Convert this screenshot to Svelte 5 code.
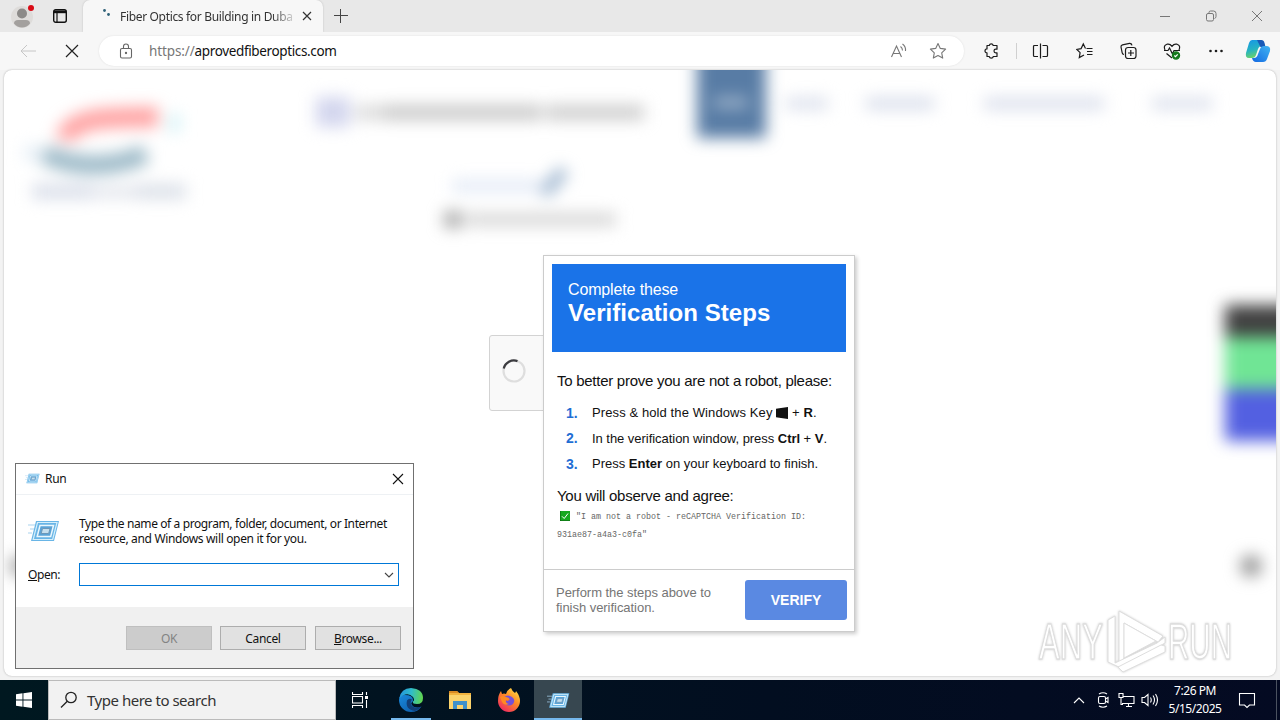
<script lang="ts">
	const tabTitle = 'Fiber Optics for Building in Duba';
	const windowControls = ['minimize', 'restore', 'close'];

	let command = $state('');
	let runOpen = $state(true);
	let time = '7:26 PM';
	let date = '5/15/2025';
</script>

{#snippet runIcon(size: number)}
	<svg width={size} height={size} viewBox="0 0 32 32">
		<path d="M8 6h23l-5 20H3z" fill="#69b5e6" />
		<path d="M9.500 7.500h19.500l-4.300 17H5.200z" fill="none" stroke="#d5effb" stroke-width="1.200" />
		<path d="M12 10.500h13.500l-2.800 11H9.200z" fill="#5ba3d6" stroke="#eaf7fd" stroke-width="1.500" />
		<path d="M14.500 13.500h7.500l-1.300 5h-7.500z" fill="#c5dfee" stroke="#6d97b8" />
		<path d="M0 10h7M2 14h4M0 18h4" stroke="#a9d3ee" stroke-width="1" />
	</svg>
{/snippet}

<div class="screen">
	<header class="tabstrip">
		<div class="profile">
			<svg width="26" height="28" viewBox="0 0 26 28">
				<circle cx="12" cy="15" r="11" fill="#dedcda" />
				<circle cx="12" cy="11.500" r="5" fill="#8c8a88" />
				<path d="M4 21.500q0-3.500 4-3.500h8q4 0 4 3.500-3 4-8 4t-8-4z" fill="#a3a09e" />
				<circle cx="21" cy="6" r="3" fill="#d90b16" />
			</svg>
		</div>
		<svg class="workspaces" width="16" height="16" viewBox="0 0 16 16">
			<rect x="1.700" y="1.700" width="12.600" height="12.600" rx="2" fill="none" stroke="#111" stroke-width="1.400" />
			<path d="M2 2.500h12v2.700H2z" fill="#111" />
			<path d="M5 5v9" stroke="#111" stroke-width="1.200" />
		</svg>
		<div class="tab">
			<svg class="tab-spinner" width="16" height="16" viewBox="0 0 16 16">
				<circle cx="6.500" cy="2.500" r="1.400" fill="#2f6178" />
				<circle cx="10.500" cy="6.500" r="1.400" fill="#2f6178" />
			</svg>
			<span class="tab-title">{tabTitle}</span>
			<svg width="10" height="10" viewBox="0 0 10 10"><path d="M1 1l8 8M9 1l-8 8" stroke="#333" stroke-width="1.200" /></svg>
		</div>
		<svg class="new-tab" width="14" height="14" viewBox="0 0 14 14"><path d="M6.500 0v14M0 6.500h14" stroke="#444" /></svg>
		<div class="controls">
			{#each windowControls as control}
				<svg width="12" height="12" viewBox="0 0 12 12" fill="none" stroke="#777">
					{#if control === 'minimize'}
						<path d="M1 6.500h10" />
					{:else if control === 'restore'}
						<rect x="1.500" y="3.500" width="7" height="7.500" rx="1.500" />
						<path d="M4 3V2.500q0-1.500 1.500-1.500h3q2.500 0 2.500 2.500v3q0 1.500-1.500 2" />
					{:else}
						<path d="M1 1l10 10M11 1L1 11" />
					{/if}
				</svg>
			{/each}
		</div>
	</header>

	<nav class="toolbar">
		<svg class="back" width="16" height="14" viewBox="0 0 16 14" fill="none" stroke="#c6c6c6"><path d="M16 7H1M7 1L1 7l6 6" /></svg>
		<svg class="stop" width="14" height="14" viewBox="0 0 14 14"><path d="M1 1l12 12M13 1L1 13" stroke="#222" stroke-width="1.200" /></svg>
		<div class="address">
			<svg width="14" height="16" viewBox="0 0 14 16" fill="none" stroke="#666" stroke-width="1.100">
				<rect x="1.500" y="5.500" width="11" height="9.500" rx="1.500" />
				<path d="M4.500 5V3.500a2.500 2.500 0 0 1 5 0V5" />
				<circle cx="7" cy="10" r=".6" fill="#666" />
			</svg>
			<span class="url"><span>https://</span>aprovedfiberoptics.com</span>
			<svg class="read" width="18" height="16" viewBox="0 0 18 16" fill="none" stroke="#777" stroke-width="1.100">
				<path d="M1.500 14L6.500 3l5 11M3.200 10.500h6.600M10.500 3.500q2 1.500 2 4M12.500 1q3.500 2.500 3 7" />
			</svg>
			<svg width="18" height="18" viewBox="0 0 18 18" fill="none" stroke="#777" stroke-width="1.100">
				<path d="M9 1.500l2.300 4.900 5.300.7-3.900 3.700 1 5.300L9 13.500l-4.700 2.600 1-5.300L1.400 7.100l5.300-.7z" stroke-linejoin="round" />
			</svg>
		</div>
		<div class="tools">
			<svg width="18" height="18" viewBox="0 0 18 18">
				<path d="M5 3.500h2.300a2 2 0 0 1 3.900 0H15v3.700h-1.200a1.800 1.800 0 0 0 0 3.600H15v3.700h-3.700a2.100 2.100 0 0 1-4.100 0H5v-3.600a2 2 0 0 1 0-4z" stroke-linejoin="round" />
			</svg>
			<i class="divider"></i>
			<svg width="18" height="18" viewBox="0 0 18 18">
				<path d="M6 3.500H2.500q-1 0-1 1v9q0 1 1 1H6M10.500 3.500h4q1 0 1 1v9q0 1-1 1h-4M8.500 1.500v15" />
			</svg>
			<svg width="18" height="18" viewBox="0 0 18 18">
				<path d="M9.500 6.500L7.300 2 5.100 6.600l-4.300.8 3.300 3.200-.8 5 4.700-2.600M10.500 6.500h6M11 9.500h5.500M11 12.500h5.500" />
			</svg>
			<svg width="18" height="18" viewBox="0 0 18 18">
				<path d="M4 12.500q-1.500-.2-1.800-1.700L1 5q-.2-1.800 1.500-2.200l7-1.500q2-.2 2.500 2" />
				<rect x="5.500" y="5.500" width="10.500" height="11" rx="2.500" />
				<path d="M10.800 8v6M8 11h6" />
			</svg>
			<svg width="18" height="18" viewBox="0 0 18 18">
				<path d="M2 8Q0 3.500 4 2.200 7 1.500 9 4.300 11 1.500 14 2.200 18 3.500 16 8M1 8.500h4L6.500 6l3 6L11 8.500h6M3.500 11.500L9 16" />
				<circle cx="13" cy="13.500" r="3.600" fill="#15791c" stroke="#15791c" />
				<path d="M11.300 13.500l1.200 1.200 2.200-2.400" stroke="#fff" />
			</svg>
			<svg width="18" height="18" viewBox="0 0 18 18"><g class="dots"><circle cx="3.500" cy="9" r="1.300" /><circle cx="9" cy="9" r="1.300" /><circle cx="14.500" cy="9" r="1.300" /></g></svg>
		</div>
		<svg class="copilot" width="26" height="26" viewBox="0 0 26 26">
			<defs>
				<linearGradient id="cpA" x1="0" y1="0" x2=".3" y2="1"><stop offset="0" stop-color="#1595e8" /><stop offset=".6" stop-color="#27b4c0" /><stop offset="1" stop-color="#6ad26b" /></linearGradient>
				<linearGradient id="cpB" x1="1" y1="0" x2="0" y2="1"><stop offset="0" stop-color="#3fb4f2" /><stop offset="1" stop-color="#1368e2" /></linearGradient>
			</defs>
			<path d="M7 2h8q3 0 4 3l1 3h-3q-3 0-4 3l-2 6q-1 3-4 3H4q-4 0-3-5L4 5q1-3 3-3z" fill="url(#cpA)" />
			<path d="M12 2h4q3 0 3.500 3l1 4h-5z" fill="#1859b7" />
			<path d="M19 8h2q5 0 4 5l-3 8q-1 3-4 3h-7q-3 0-4-4h2q3 0 4-4l2-5q1-3 4-3z" fill="url(#cpB)" />
		</svg>
	</nav>

	<main class="viewport">
		<svg class="site" width="1272" height="606" viewBox="4 70 1272 606">
			<defs>
				<filter id="soft" x="0" y="40" width="1310" height="660" filterUnits="userSpaceOnUse" color-interpolation-filters="sRGB">
					<feGaussianBlur stdDeviation="8" />
				</filter>
			</defs>
			<g filter="url(#soft)">
				<path d="M66 140q2-20 46-22 24-1 46-1" fill="none" stroke="#ffa3a3" stroke-width="20" />
				<path d="M44 154q50 22 102 0" fill="none" stroke="#9dbac8" stroke-width="19" />
				<rect x="168" y="114" width="12" height="18" fill="#d3f2f6" />
				<rect x="24" y="146" width="18" height="14" fill="#e5eef6" />
				<rect x="32" y="184" width="60" height="15" fill="#dadfea" />
				<rect x="92" y="186" width="44" height="12" fill="#e2e5ec" />
				<rect x="136" y="184" width="50" height="15" fill="#dbe0e8" />
				<rect x="316" y="97" width="34" height="30" fill="#d3d6ee" />
				<rect x="356" y="105" width="22" height="15" fill="#dadada" />
				<rect x="380" y="105" width="162" height="15" fill="#c9c9c9" />
				<rect x="546" y="105" width="98" height="15" fill="#cdcdcd" />
				<rect x="697" y="30" width="69" height="108" fill="#587ca5" />
				<rect x="714" y="98" width="34" height="9" fill="#a8bbd0" />
				<rect x="786" y="98" width="42" height="11" fill="#d9deeb" />
				<rect x="866" y="98" width="68" height="11" fill="#d5dbe9" />
				<rect x="984" y="98" width="120" height="11" fill="#d7dcea" />
				<rect x="1152" y="98" width="60" height="11" fill="#d9deeb" />
				<rect x="452" y="180" width="90" height="12" fill="#e3eaf6" />
				<path d="M544 194l20-24" stroke="#9cb4ce" stroke-width="12" />
				<rect x="444" y="211" width="18" height="17" fill="#aaa" />
				<rect x="466" y="213" width="150" height="13" fill="#d6d6d6" />
				<rect x="1225" y="305" width="90" height="32" fill="#414141" />
				<rect x="1225" y="337" width="90" height="52" fill="#70e595" />
				<rect x="1225" y="389" width="90" height="52" fill="#5360e1" />
				<circle cx="1251" cy="566" r="11" fill="#999" />
				<circle cx="20" cy="566" r="11" fill="#aaa" />
			</g>
		</svg>

		<div class="checkbox">
			<svg width="26" height="26" viewBox="0 0 26 26" fill="none" stroke-width="2.200">
				<circle cx="13" cy="13" r="10.500" stroke="#dedede" />
				<path d="M2.700 10.500A10.500 10.500 0 0 1 16.500 3.100" stroke="#3c3c40" />
			</svg>
		</div>

		<section class="popup">
			<div class="popup-head">
				<div class="small">Complete these</div>
				<div class="large">Verification Steps</div>
			</div>
			<div class="popup-body">
				<p class="prove">To better prove you are not a robot, please:</p>
				<ol>
					<li>
						<span class="s1">Press &amp; hold the Windows Key
						<svg width="12" height="12" viewBox="0 0 12 12"><path d="M0 1.800L5 1v10L0 10.200zM5 1l7-1v12l-7-1z" fill="#111" /></svg>
						+ <b>R</b>.</span>
					</li>
					<li><span class="s2">In the verification window, press <b>Ctrl</b> + <b>V</b>.</span></li>
					<li><span>Press <b>Enter</b> on your keyboard to finish.</span></li>
				</ol>
				<p class="agree">You will observe and agree:</p>
				<p class="code">
					<svg width="10" height="10" viewBox="0 0 10 10"><path d="M0 0h10v10H0z" fill="#17a81f" /><path d="M0 0v10h10" fill="none" stroke="#0a5b10" /><path d="M2 5.300L4.200 7.500 8 2.500" fill="none" stroke="#fff" /></svg>
					"I am not a robot - reCAPTCHA Verification ID: 931ae87-a4a3-c0fa"
				</p>
			</div>
			<div class="popup-foot">
				<span>Perform the steps above to<br />finish verification.</span>
				<button>VERIFY</button>
			</div>
		</section>

		<svg class="watermark" width="200" height="70" viewBox="0 0 200 70">
			<g fill="#fff" stroke="#dedede" stroke-width="1" stroke-linejoin="round">
				<text x="2" y="51" textLength="64" lengthAdjust="spacingAndGlyphs">ANY</text>
				<text x="131" y="51" textLength="64" lengthAdjust="spacingAndGlyphs">RUN</text>
				<path d="M82 3l44 25-5 6-34-19v35l-5 5z" />
				<path d="M71 12l7-4v47l42-20 8-6v6L84 60l-13-6z" />
				<path d="M81 59l43-22 4 1v6L86 64z" />
				<path d="M87 15l32 18-32 17z" />
			</g>
		</svg>
	</main>

	{#if runOpen}
		<div class="run" role="dialog" aria-label="Run">
			<div class="run-title">
				{@render runIcon(15)}
				<span>Run</span>
				<svg class="run-close" role="presentation" width="12" height="12" viewBox="0 0 12 12" onclick={() => (runOpen = false)}>
					<path d="M1 1l10 10M11 1L1 11" stroke="#111" stroke-width="1.100" />
				</svg>
			</div>
			<div class="run-main">
				<div class="run-info">
					{@render runIcon(32)}
					<p>Type the name of a program, folder, document, or Internet<br /><span>resource, and Windows will open it for you.</span></p>
				</div>
				<div class="run-open">
					<label for="command"><u>O</u>pen:</label>
					<div class="combo">
						<input id="command" bind:value={command} />
						<svg width="10" height="6" viewBox="0 0 10 6"><path d="M1 1l4 4 4-4" fill="none" stroke="#444" stroke-width="1.100" /></svg>
					</div>
				</div>
			</div>
			<div class="run-buttons">
				<button disabled={command === ''}>OK</button>
				<button onclick={() => (runOpen = false)}>Cancel</button>
				<button><u>B</u>rowse...</button>
			</div>
		</div>
	{/if}

	<footer class="taskbar">
		<div class="start">
			<svg width="16" height="16" viewBox="0 0 16 16" fill="#fff"><path d="M0 2.200L6.500 1.300v6.200H0zM7.400 1.200L16 0v7.500H7.400zM0 8.400h6.500v6.300L0 13.800zM7.400 8.400H16V16l-8.600-1.200z" /></svg>
		</div>
		<div class="search">
			<svg width="18" height="18" viewBox="0 0 18 18" fill="none" stroke="#222" stroke-width="1.300"><circle cx="11" cy="6.500" r="5.200" /><path d="M7.300 10.200L1 16.500" /></svg>
			<span>Type here to search</span>
		</div>
		<div class="app task-view">
			<svg width="16" height="16" viewBox="0 0 16 16" fill="none" stroke="#fff" stroke-width="1.100">
				<path d="M.5 0v2.500h10V0M.5 16v-2.500h10V16M.5 4.500h10v6.500H.5zM14.500 0v3M14.500 8v8" /><path d="M13 4h3v3h-3z" fill="#fff" stroke="none" />
			</svg>
		</div>
		<div class="app running">
			<svg width="24" height="24" viewBox="0 0 24 24">
				<defs>
					<linearGradient id="edTop" x1="0" y1=".3" x2="1" y2=".4"><stop offset="0" stop-color="#2393dc" /><stop offset=".5" stop-color="#30bccb" /><stop offset="1" stop-color="#61d64f" /></linearGradient>
					<linearGradient id="edLow" x1="0" y1="0" x2="1" y2="1"><stop offset="0" stop-color="#1989dc" /><stop offset="1" stop-color="#0c57a4" /></linearGradient>
				</defs>
				<path d="M0 12Q0 7 6 7q8 0 8 5c0 3-3 2-1 5s7 3 9.500 1.500Q19 24 12 24A12 12 0 0 1 0 12z" fill="url(#edLow)" />
				<path d="M8 12.500q-2 9 8 10.500 4-1 6.500-4.500-8 3-10.500-2-1-3 1-5-3-2-5 1z" fill="#123f78" />
				<path d="M.2 10.500Q2 0 12 0q12 1 12 10 0 6-6 6-5 0-4-2.500 2-1.500 0-4.500Q8 3 .2 10.500z" fill="url(#edTop)" />
			</svg>
		</div>
		<div class="app">
			<svg width="22" height="20" viewBox="0 0 22 20">
				<path d="M0 1h8l2 2h12v16H0z" fill="#f2b33e" /><path d="M0 1h8l2 2H0z" fill="#d98a22" /><path d="M0 5h22v14H0z" fill="#fbd36c" />
				<path d="M4 11h14v8h-4v-4H8v4H4z" fill="#3f91ca" />
			</svg>
		</div>
		<div class="app">
			<svg width="24" height="24" viewBox="0 0 24 24">
				<defs><linearGradient id="fox" x1=".9" y1="0" x2=".2" y2="1"><stop offset="0" stop-color="#ffe64a" /><stop offset=".45" stop-color="#ff8b25" /><stop offset="1" stop-color="#ee2465" /></linearGradient></defs>
				<path d="M14 0q1 3 4 5 1-1 1-2 4 5 4 10a11 11 0 0 1-22 0Q1 7 4 3l1 3q2-1 4 0 1-4 5-6z" fill="url(#fox)" />
				<path d="M7 9q4-3 8 0 4 3 1 7-4 3-8 0-2-2-1-4l4 1 2-2-3-1z" fill="#7550d8" />
				<path d="M3 9q3-2 6 0l3 1q0 2-3 2-1 3 3 4-5 2-7-2z" fill="#ff8a22" />
			</svg>
		</div>
		<div class="app running active">{@render runIcon(23)}</div>

		<div class="tray">
			<svg width="12" height="8" viewBox="0 0 12 8"><path d="M1 7l5-5 5 5" /></svg>
			<svg width="14" height="16" viewBox="0 0 14 16"><rect x="2.500" y="4.500" width="7" height="7" rx="1.500" /><path d="M9.500 7l2.500-1.500v5L9.500 9M3 2q4-2.500 8 0M3 14q4 2.500 8 0" /></svg>
			<svg width="17" height="16" viewBox="0 0 17 16"><path d="M5 4.500h11v7H4M8 14.500h6M10.500 12v2M1 1.500h4v4H1zM3 5.500v7h2" /></svg>
			<svg width="18" height="16" viewBox="0 0 18 16"><path d="M1 5.500h2.500L7 2.500v11l-3.500-3H1zM9.500 5.500q1.500 2.500 0 5M12 3.500q3 4.500 0 9M14.500 2q4 6 0 12" /></svg>
			<div class="clock"><div>{time}</div><div>{date}</div></div>
			<svg class="notice" width="18" height="18" viewBox="0 0 18 18"><path d="M1.500 2.500h15v11.500h-5L9 16.500l-2.500-2.500h-5z" /></svg>
			<i class="peek"></i>
		</div>
	</footer>
</div>

<style>
	:global(body) {
		margin: 0;
		overflow: hidden;
	}

	.screen {
		position: relative;
		width: 1280px;
		height: 720px;
		display: flex;
		flex-direction: column;
		background: #f3f3f3;
		font-family: 'Noto Sans', 'Open Sans', sans-serif;
		font-size: 12px;
		color: #111;
		overflow: hidden;
	}

	svg {
		flex: none;
		display: block;
	}

	.tabstrip {
		height: 32px;
		flex: none;
		display: flex;
		align-items: center;
		background: #e8e8e8;
		box-sizing: border-box;
	}

	.profile {
		width: 42px;
		padding-left: 10px;
		box-sizing: border-box;
	}

	.workspaces {
		margin-left: 10px;
	}

	.tab {
		width: 240px;
		height: 32px;
		margin-left: 15px;
		padding: 0 11px 0 15px;
		box-sizing: border-box;
		display: flex;
		align-items: center;
		background: #f7f7f7;
		border-radius: 7px 7px 0 0;
		box-shadow: 0 0 2px #bbb;
		clip-path: inset(0 -3px 0 -3px);
	}

	.tab-title {
		flex: 1;
		margin: 0 9px 0 6px;
		white-space: nowrap;
		letter-spacing: -0.33px;
		color: #333;
		mask-image: linear-gradient(90deg, #000 152px, transparent 178px);
	}

	.new-tab {
		margin-left: 11px;
	}

	.controls {
		margin-left: auto;
		display: flex;
		gap: 34px;
		padding-right: 17px;
	}

	.toolbar {
		height: 38px;
		flex: none;
		display: flex;
		align-items: center;
		background: #f7f7f7;
	}

	.back {
		margin-left: 20px;
	}

	.stop {
		margin-left: 29px;
	}

	.address {
		width: 865px;
		height: 30px;
		margin-left: 20px;
		padding: 0 17px 0 20px;
		box-sizing: border-box;
		display: flex;
		align-items: center;
		background: #fff;
		border-radius: 15px;
		box-shadow: 0 0 2px #ddd;
	}

	.url {
		margin-left: 16px;
		font-size: 13.5px;
		letter-spacing: -0.36px;
	}

	.url span {
		color: #777;
		letter-spacing: -0.12px;
	}

	.read {
		margin-left: auto;
		margin-right: 21px;
	}

	.tools {
		width: 243px;
		margin-left: 18px;
		display: flex;
		justify-content: space-between;
		align-items: center;
	}

	.tools svg {
		fill: none;
		stroke: #1c1c1c;
		stroke-width: 1.2;
	}

	.tools .dots {
		fill: #1c1c1c;
		stroke: none;
	}

	.divider {
		width: 1px;
		height: 16px;
		margin: 0 -10px;
		background: #d0d0d0;
	}

	.copilot {
		margin-left: 20px;
	}

	.viewport {
		position: relative;
		width: 1272px;
		height: 606px;
		margin: 0 4px;
		background: #fff;
		border-radius: 8px;
		box-shadow: 0 0 2px #aaa;
		overflow: hidden;
	}

	.checkbox {
		position: absolute;
		left: 485px;
		top: 265px;
		width: 300px;
		height: 76px;
		box-sizing: border-box;
		padding: 22px 11px;
		background: #f9f9f9;
		border: 1px solid #d3d3d3;
		border-radius: 3px;
	}

	.popup {
		position: absolute;
		left: 539px;
		top: 185px;
		width: 312px;
		height: 377px;
		box-sizing: border-box;
		display: flex;
		flex-direction: column;
		background: #fff;
		border: 1px solid #ccc;
		box-shadow: 2px 2px 4px rgba(0, 0, 0, 0.2);
		font-family: 'Liberation Sans', Arial, sans-serif;
		white-space: nowrap;
	}

	.popup-head {
		height: 88px;
		margin: 8px 8px 0;
		padding: 16px;
		box-sizing: border-box;
		background: #1a73e8;
		color: #fff;
	}

	.small {
		font-size: 16px;
		line-height: 19px;
		letter-spacing: -0.14px;
	}

	.large {
		font-size: 24px;
		line-height: 28px;
		font-weight: bold;
		letter-spacing: 0.05px;
	}

	.popup-body {
		flex: 1;
		padding: 20px 13px 0;
	}

	.popup-body p {
		margin: 0;
	}

	.prove,
	.agree {
		font-size: 15px;
		line-height: 18px;
		letter-spacing: -0.27px;
	}

	ol {
		margin: 10px 0 10px;
		padding: 0;
		list-style: none;
		counter-reset: step;
		font-size: 13px;
	}

	li {
		height: 25.5px;
		display: flex;
		align-items: center;
		counter-increment: step;
	}

	li::before {
		content: counter(step) '.';
		width: 26px;
		padding-left: 9px;
		font-size: 14px;
		font-weight: bold;
		color: #1f6ed4;
	}

	li svg {
		display: inline-block;
		vertical-align: -2px;
	}

	.s1 {
		letter-spacing: 0.1px;
	}

	.s2 {
		letter-spacing: -0.04px;
	}

	.code {
		width: 256px;
		padding-top: 3px;
		font: 8.33px/18px 'Liberation Mono', monospace;
		color: #666;
		white-space: normal;
	}

	.code svg {
		display: inline-block;
		vertical-align: -2px;
		margin: 0 1px 0 3px;
	}

	.popup-foot {
		height: 62px;
		padding: 0 7px 2px 12px;
		box-sizing: border-box;
		display: flex;
		align-items: center;
		justify-content: space-between;
		border-top: 1px solid #ccc;
		font-size: 13px;
		line-height: 15px;
		letter-spacing: -0.04px;
		color: #757575;
	}

	.popup-foot button {
		width: 102px;
		height: 40px;
		border: 0;
		border-radius: 3px;
		background: #5a89e2;
		color: #fff;
		font: bold 14px 'Liberation Sans', Arial, sans-serif;
	}

	.watermark {
		position: absolute;
		left: 1033px;
		top: 538px;
		overflow: visible;
		font: 50px 'Liberation Sans', sans-serif;
		filter: drop-shadow(0 0 1px #ccc);
	}

	.watermark text {
		stroke-width: 1.4;
	}

	.run {
		position: absolute;
		left: 15px;
		top: 463px;
		width: 399px;
		height: 206px;
		box-sizing: border-box;
		display: flex;
		flex-direction: column;
		background: #fff;
		border: 1px solid #707070;
		white-space: nowrap;
	}

	.run-title {
		height: 31px;
		box-sizing: border-box;
		display: flex;
		align-items: center;
		gap: 5px;
		padding: 0 9px 1px;
		border-bottom: 1px solid #eef1f4;
	}

	.run-title span {
		letter-spacing: -0.3px;
	}

	.run-close {
		margin-left: auto;
	}

	.run-main {
		flex: 1;
		padding: 20px 14px 0 12px;
	}

	.run-info {
		display: flex;
		align-items: center;
		gap: 19px;
		height: 32px;
	}

	.run-info p {
		margin: 0;
		line-height: 15px;
		letter-spacing: -0.39px;
	}

	.run-info span {
		letter-spacing: -0.34px;
	}

	.run-open {
		display: flex;
		align-items: center;
		margin-top: 16px;
	}

	.run-open label {
		width: 51px;
		letter-spacing: -0.4px;
	}

	.combo {
		flex: 1;
		height: 23px;
		box-sizing: border-box;
		display: flex;
		align-items: center;
		padding-right: 4px;
		border: 1px solid #0078d7;
	}

	.combo input {
		flex: 1;
		min-width: 0;
		border: 0;
		outline: 0;
		background: none;
	}

	.run-buttons {
		height: 61px;
		box-sizing: border-box;
		display: flex;
		justify-content: flex-end;
		gap: 8px;
		padding: 19px 12px 0;
		background: #f0f0f0;
	}

	.run-buttons button {
		width: 86px;
		height: 24px;
		padding: 0;
		border: 1px solid #adadad;
		background: #e1e1e1;
		font: 12px 'Noto Sans', sans-serif;
		letter-spacing: -0.35px;
		color: #111;
	}

	.run-buttons button:last-child {
		margin-left: 1px;
	}

	.run-buttons button:disabled {
		background: #ccc;
		border-color: #bfbfbf;
		color: #838383;
	}

	.taskbar {
		height: 40px;
		margin-top: auto;
		display: flex;
		background: linear-gradient(90deg, #001820, #020e20 60%, #040a22);
		color: #fff;
	}

	.start {
		width: 48px;
		display: grid;
		place-items: center;
	}

	.search {
		width: 288px;
		box-sizing: border-box;
		display: flex;
		align-items: center;
		gap: 9px;
		padding-left: 11px;
		background: #f2f2f2;
		border: 1px solid #bbb;
		color: #333;
		font-size: 15px;
		letter-spacing: -0.48px;
	}

	.app {
		width: 48px;
		margin-right: 1px;
		box-sizing: border-box;
		display: grid;
		place-items: center;
	}

	.task-view {
		margin-right: 3px;
	}

	.running {
		background: linear-gradient(#76b9ed, #76b9ed) 50% 100% / 40px 2px no-repeat;
	}

	.active {
		background: linear-gradient(#76b9ed, #76b9ed) 50% 100% / 48px 2px no-repeat, #374750;
	}

	.tray {
		margin-left: auto;
		display: flex;
		align-items: center;
	}

	.tray svg {
		margin-right: 8px;
		fill: none;
		stroke: #fff;
		stroke-width: 1.1;
	}

	.tray svg:first-child {
		margin-right: 11px;
	}

	.tray svg:nth-child(3) {
		margin-right: 6px;
	}

	.tray svg:nth-child(4) {
		margin-right: 7px;
	}

	.clock {
		width: 58px;
		text-align: center;
		line-height: 18px;
		letter-spacing: -0.45px;
		white-space: nowrap;
	}

	.tray .notice {
		margin: 0 20px 0 14px;
	}

	.peek {
		width: 4px;
		height: 40px;
		box-sizing: border-box;
		border-left: 1px solid #4b5260;
	}
</style>
